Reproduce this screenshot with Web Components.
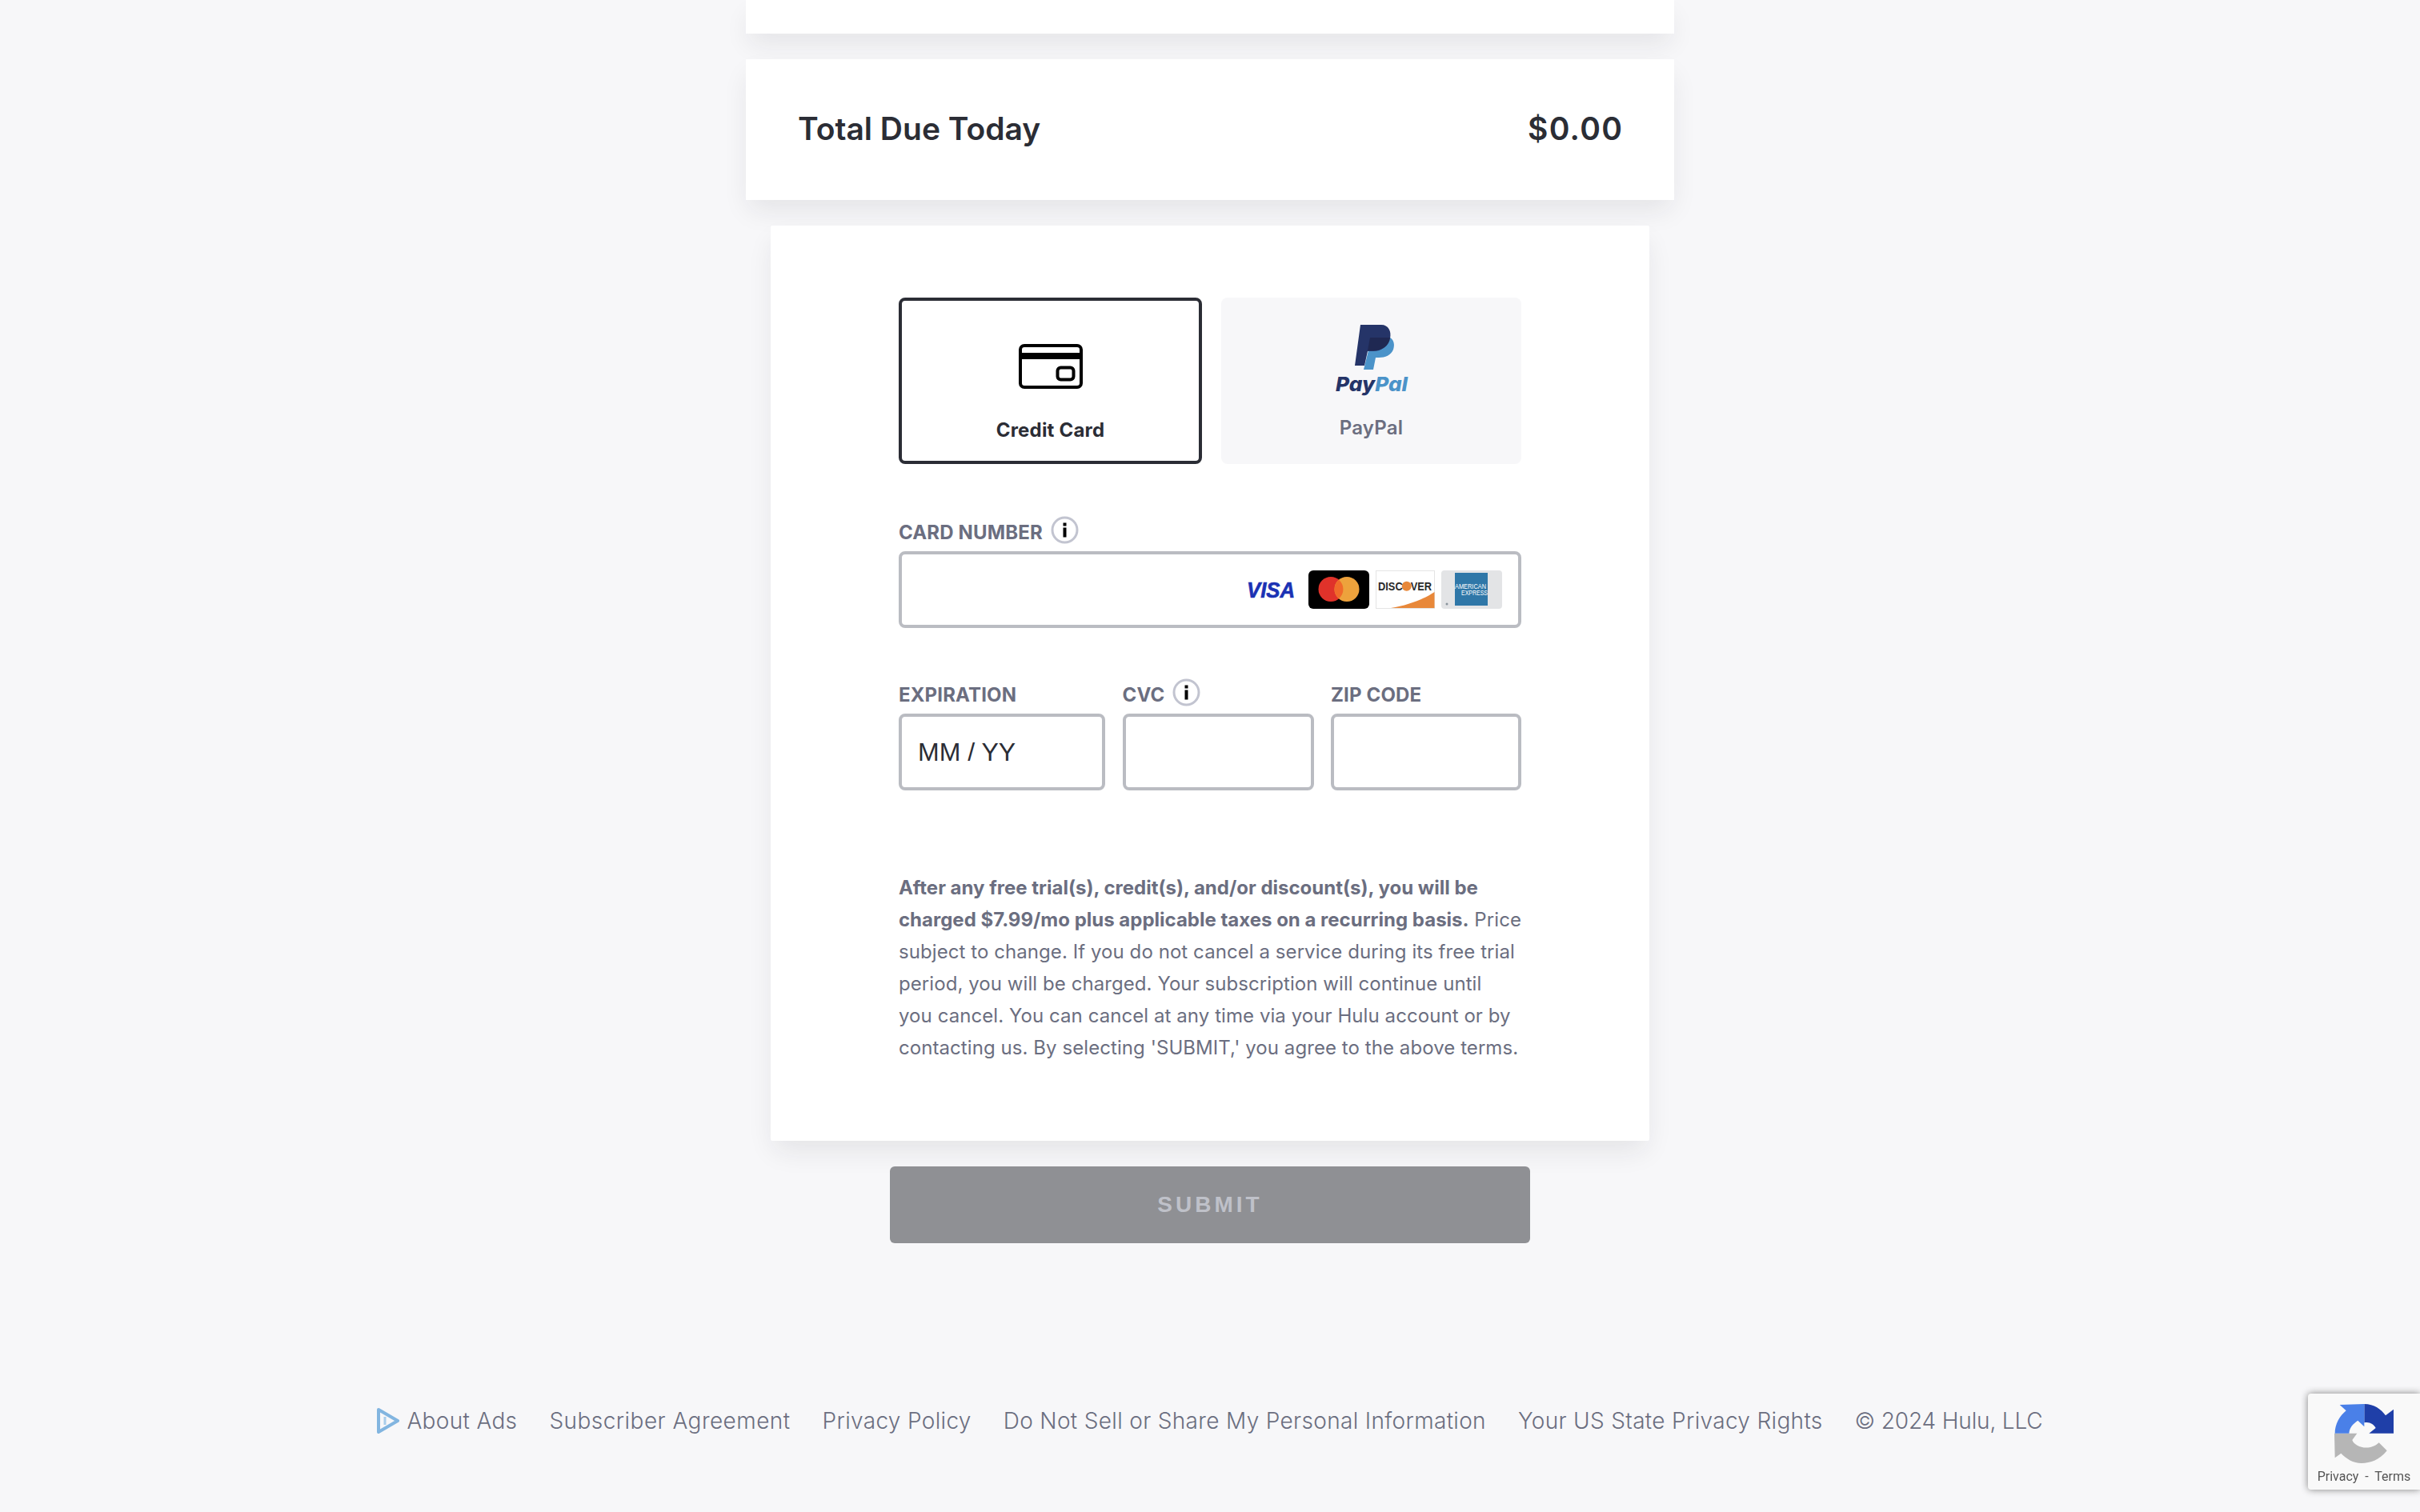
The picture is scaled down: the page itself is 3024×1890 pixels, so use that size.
<!DOCTYPE html>
<html lang="en">
<head>
<meta charset="utf-8">
<title>Hulu checkout</title>
<style>
  html, body { margin: 0; height: 1890px; overflow: hidden; background: #f7f7f9; }
  body { font-family: Inter, "Liberation Sans", sans-serif; color: #2b2d35; }
  payment-form b { letter-spacing: 0; }
  site-footer a:nth-of-type(2) { letter-spacing: .45px; }
  site-footer a:last-of-type { letter-spacing: -.15px; }
</style>
</head>
<body>
<checkout-page>
  <plain-card class="stub"></plain-card>
  <total-card label="Total Due Today" amount="$0.00"></total-card>
  <payment-form>
    <pay-option slot="options" label="Credit Card" selected>
      <svg slot="icon" style="margin:54px 0 36px" width="80" height="56" viewBox="0 0 80 56" fill="none">
        <rect x="2" y="2" width="76" height="52" rx="5" stroke="#000" stroke-width="4"/>
        <rect x="3" y="11" width="74" height="8" fill="#000"/>
        <rect x="48.5" y="29.5" width="20" height="15" rx="4" stroke="#000" stroke-width="4"/>
      </svg>
    </pay-option>
    <pay-option slot="options" label="PayPal">
      <svg slot="icon" style="margin:26px 0 17px" width="100" height="100" viewBox="23 12 100 100">
        <path d="M96 32C101 35 102 41 100 47C97 54 90 57 82 57H78L75 72H63L69 48H75C85 48 94 43 96 32Z" fill="#4b93c9"/>
        <path d="M59 16H85C94 16 98 24 96 33C94 43 85 49 75 49H68L64 67H52Z" fill="#253468"/>
        <path d="M71 32H96C95 42 86 48 76 48H68Z" fill="#1f2852"/>
        <text x="28" y="99" font-family="Inter, 'Liberation Sans', sans-serif" font-size="25" font-weight="800" font-style="italic" textLength="90" lengthAdjust="spacingAndGlyphs"><tspan fill="#253468">Pay</tspan><tspan fill="#4b93c9">Pal</tspan></text>
      </svg>
    </pay-option>

    <form-field slot="number" label="CARD NUMBER" info>
      <card-logos></card-logos>
    </form-field>

    <form-field slot="expiry" label="EXPIRATION">MM / YY</form-field>
    <form-field slot="cvc" label="CVC" info></form-field>
    <form-field slot="zip" label="ZIP CODE"></form-field>

    <span slot="terms"><b>After any free trial(s), credit(s), and/or discount(s), you will be charged $7.99/mo plus applicable taxes on a recurring basis.</b> Price subject to change. If you do not cancel a service during its free trial period, you will be charged. Your subscription will continue until<br>you cancel. You can cancel at any time via your Hulu account or by contacting us. By selecting 'SUBMIT,' you agree to the above terms.</span>
  </payment-form>
  <submit-button>SUBMIT</submit-button>
  <site-footer>
    <a>About Ads</a>
    <a>Subscriber Agreement</a>
    <a>Privacy Policy</a>
    <a>Do Not Sell or Share My Personal Information</a>
    <a>Your US State Privacy Rights</a>
    <a>© 2024 Hulu, LLC</a>
  </site-footer>
</checkout-page>
<recaptcha-badge></recaptcha-badge>

<script>
const CARD_SHADOW = '0 16px 32px -4px rgba(30, 32, 44, 0.09)';

class CheckoutPage extends HTMLElement {
  constructor() {
    super();
    this.attachShadow({ mode: 'open' }).innerHTML = `
      <style>
        :host { display: flex; flex-direction: column; align-items: center; }
      </style>
      <slot></slot>
    `;
  }
}

class PlainCard extends HTMLElement {
  constructor() {
    super();
    this.attachShadow({ mode: 'open' }).innerHTML = `
      <style>
        :host { display: block; width: 1160px; height: 42px; background: #fff; box-shadow: ${CARD_SHADOW}; }
      </style>
    `;
  }
}

class TotalCard extends HTMLElement {
  connectedCallback() {
    this.attachShadow({ mode: 'open' }).innerHTML = `
      <style>
        :host {
          display: flex; justify-content: space-between; align-items: center;
          box-sizing: border-box; width: 1160px; height: 176px; margin-top: 32px; padding: 0 65px 3px;
          background: #fff; box-shadow: ${CARD_SHADOW};
          font-size: 39px; font-weight: 600; color: #2b2d35;
        }
        .amount { letter-spacing: 1.3px; margin-right: -1.3px; }
      </style>
      <span>${this.getAttribute('label')}</span>
      <span class="amount">${this.getAttribute('amount')}</span>
    `;
  }
}

class PaymentForm extends HTMLElement {
  constructor() {
    super();
    this.attachShadow({ mode: 'open' }).innerHTML = `
      <style>
        :host {
          display: block; box-sizing: border-box; width: 1098px; margin-top: 32px;
          padding: 90px 160px 96px; background: #fff; border-radius: 2px; box-shadow: ${CARD_SHADOW};
        }
        .options { display: grid; grid-template-columns: 379px 375px; gap: 24px; margin-bottom: 65px; }
        .row { display: grid; grid-template-columns: 258px 239px 238px; column-gap: 21.5px; margin-top: 63px; }
        .terms {
          margin: 102px -1px 0 0; font-size: 24px; line-height: 40px; color: #6b6e80; letter-spacing: .07px;
        }
      </style>
      <div class="options"><slot name="options"></slot></div>
      <slot name="number"></slot>
      <div class="row">
        <slot name="expiry"></slot>
        <slot name="cvc"></slot>
        <slot name="zip"></slot>
      </div>
      <p class="terms"><slot name="terms"></slot></p>
    `;
  }
}

class PayOption extends HTMLElement {
  connectedCallback() {
    const selected = this.hasAttribute('selected');
    this.attachShadow({ mode: 'open' }).innerHTML = `
      <style>
        :host {
          display: flex; flex-direction: column; align-items: center;
          box-sizing: border-box; height: 208px; border-radius: 8px;
          border: 4px solid ${selected ? '#2b2d35' : 'transparent'};
          background: ${selected ? '#fff' : '#f7f7f9'};
        }
        .label {
          font-size: 24px; font-weight: ${selected ? 700 : 600}; line-height: 32px; letter-spacing: .2px;
          color: ${selected ? '#2b2d35' : '#6b6e80'};
        }
      </style>
      <slot name="icon"></slot>
      <span class="label">${this.getAttribute('label')}</span>
    `;
  }
}

class InfoIcon extends HTMLElement {
  constructor() {
    super();
    this.attachShadow({ mode: 'open' }).innerHTML = `
      <style>
        :host { display: block; width: 35px; height: 35px; }
        svg { display: block; }
      </style>
      <svg width="35" height="35" viewBox="0 0 35 35">
        <circle cx="17.5" cy="17.5" r="15.5" fill="none" stroke="#c2c4d0" stroke-width="3"/>
        <rect x="15.5" y="8.5" width="4" height="4" fill="#000"/>
        <rect x="15.5" y="14.5" width="4" height="12" fill="#000"/>
      </svg>
    `;
  }
}

class FormField extends HTMLElement {
  connectedCallback() {
    const info = this.hasAttribute('info') ? '<info-icon></info-icon>' : '';
    this.attachShadow({ mode: 'open' }).innerHTML = `
      <style>
        :host { display: block; }
        .head { display: flex; align-items: flex-end; gap: 10px; height: 44px; }
        .label {
          font-size: 24px; font-weight: 700; line-height: 32px; letter-spacing: .15px; margin-bottom: 7px; color: #6b6e80;
        }
        info-icon { margin-bottom: 9px; }
        .box {
          display: flex; align-items: center; box-sizing: border-box; height: 96px;
          padding: 0 20px; border: 4px solid #babcc2; border-radius: 8px; background: #fff;
          font: 32px "Liberation Sans", Arial, sans-serif; color: #2b2d35;
        }
      </style>
      <div class="head"><span class="label">${this.getAttribute('label')}</span>${info}</div>
      <div class="box"><slot></slot></div>
    `;
  }
}

class CardLogos extends HTMLElement {
  constructor() {
    super();
    this.attachShadow({ mode: 'open' }).innerHTML = `
      <style>
        :host { display: flex; align-items: center; width: 100%; justify-content: flex-end; }
        svg { display: block; flex: none; overflow: visible; }
        text { font-family: "Liberation Sans", Arial, sans-serif; }
        .visa { margin-right: 16px; }
        .mc, .disc { margin-right: 8px; }
      </style>
      <svg class="visa" width="61" height="28" viewBox="0 0 61 28">
        <text x="0" y="24" font-size="28" font-weight="700" font-style="italic" fill="#1b32b4" stroke="#1b32b4" stroke-width=".7" textLength="60" lengthAdjust="spacingAndGlyphs">VISA</text>
      </svg>
      <svg class="mc" width="76" height="48" viewBox="0 0 76 48">
        <rect width="76" height="48" rx="6" fill="#000"/>
        <circle cx="28" cy="23.5" r="15.5" fill="#e0322a"/>
        <circle cx="48" cy="23.5" r="15.5" fill="#eda23c"/>
        <path d="M38 11.7a15.5 15.5 0 0 1 0 23.6a15.5 15.5 0 0 1 0-23.6Z" fill="#f06a2a"/>
      </svg>
      <svg class="disc" width="74" height="48" viewBox="0 0 74 48">
        <rect x=".5" y=".5" width="73" height="47" fill="#fff" stroke="#e4e4e4"/>
        <path d="M19 47C40 44 60 36 73.500 27V47Z" fill="#e8883a"/>
        <circle cx="38.700" cy="19.700" r="6" fill="#e8883a"/>
        <text x="3" y="25" font-size="15" font-weight="700" fill="#2a2a2a" textLength="67" lengthAdjust="spacingAndGlyphs">DISC<tspan fill="#e8883a">O</tspan>VER</text>
      </svg>
      <svg width="76" height="48" viewBox="0 0 76 48">
        <rect width="76" height="48" rx="4" fill="#e3e4e6"/>
        <rect x="17" y="3" width="41" height="41" fill="#2f77a8"/>
        <text x="17" y="23" font-size="9" fill="#fff" textLength="39" lengthAdjust="spacingAndGlyphs">AMERICAN</text>
        <text x="25" y="31" font-size="9" fill="#fff" textLength="33" lengthAdjust="spacingAndGlyphs">EXPRESS</text>
        <circle cx="7" cy="42" r="1.500" fill="#8a949c"/>
      </svg>
    `;
  }
}

class SubmitButton extends HTMLElement {
  constructor() {
    super();
    this.attachShadow({ mode: 'open' }).innerHTML = `
      <style>
        :host {
          display: flex; align-items: center; justify-content: center;
          width: 800px; height: 96px; margin-top: 32px; border-radius: 6px;
          background: #8f9094; color: #bfc1c9;
          font: 700 28px "Liberation Sans", Arial, sans-serif; letter-spacing: 4px;
        }
      </style>
      <slot></slot>
    `;
  }
}

class SiteFooter extends HTMLElement {
  constructor() {
    super();
    this.attachShadow({ mode: 'open' }).innerHTML = `
      <style>
        :host {
          display: flex; align-items: center; justify-content: center; gap: 40px;
          margin-top: 201px; height: 42px; font-size: 28px; font-weight: 300; letter-spacing: .33px; color: #6b6e80;
        }
        svg { display: block; }
      </style>
      <svg width="28" height="32" viewBox="0 0 28 32" style="margin-right:-31px">
        <path d="M2 2L26 16L2 30Z" fill="none" stroke="#82b5e0" stroke-width="4" stroke-linejoin="round"/>
        <path d="M10 11V21" stroke="#a9cdeb" stroke-width="3"/>
      </svg>
      <slot></slot>
    `;
  }
}

class RecaptchaBadge extends HTMLElement {
  constructor() {
    super();
    this.attachShadow({ mode: 'open' }).innerHTML = `
      <style>
        :host {
          position: fixed; right: 0; bottom: 28px; display: flex; flex-direction: column; align-items: center;
          box-sizing: border-box; width: 140px; height: 120px; padding-top: 13px;
          background: #f9f9f9; border-radius: 4px 0 0 4px; box-shadow: 0 0 10px #808080;
        }
        svg { display: block; }
        span { font: 16px/26px Roboto, sans-serif; color: #555; margin-top: 4px; white-space: pre; }
      </style>
      <svg width="74" height="74" viewBox="0 0 222 222">
        <path d="M0 110H85L67 135C75 160 130 180 167 145L197 175C170 210 135 222 102 222C70 222 45 205 25 185L2 202Z" fill="#b6b6b6"/>
        <path d="M112 0C150 0 175 20 192 43L222 20V110H130L155 90C148 75 130 65 112 70Z" fill="#1f3fa8"/>
        <path d="M112 0L20 3L44 25C20 45 2 75 2 110H55C58 85 70 75 88 62L112 85Z" fill="#4a80e8"/>
      </svg>
      <span>Privacy  -  Terms</span>
    `;
  }
}

customElements.define('info-icon', InfoIcon);
customElements.define('card-logos', CardLogos);
customElements.define('plain-card', PlainCard);
customElements.define('total-card', TotalCard);
customElements.define('pay-option', PayOption);
customElements.define('form-field', FormField);
customElements.define('payment-form', PaymentForm);
customElements.define('submit-button', SubmitButton);
customElements.define('site-footer', SiteFooter);
customElements.define('recaptcha-badge', RecaptchaBadge);
customElements.define('checkout-page', CheckoutPage);
</script>
</body>
</html>
